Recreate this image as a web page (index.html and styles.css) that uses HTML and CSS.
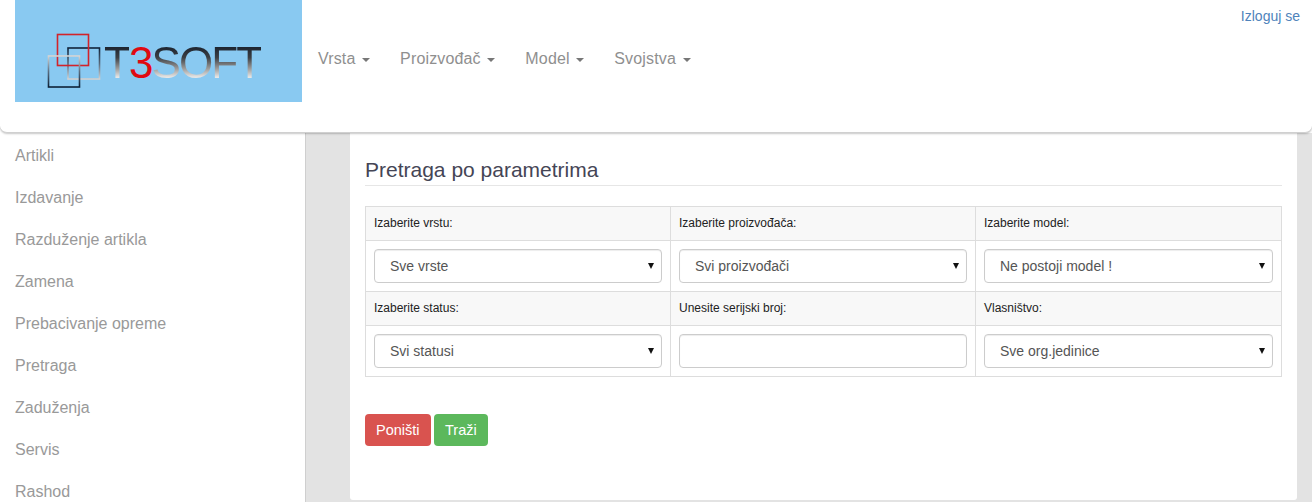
FILE: index.html
```html
<!DOCTYPE html>
<html lang="sr">
<head>
<meta charset="utf-8">
<title>T3SOFT</title>
<link rel="stylesheet" href="styles.css">
</head>
<body>
<header class="navbar">
  <a class="brand" href="#">
    <svg class="brand-squares" width="58" height="56" viewBox="0 0 58 56" fill="none">
      <defs>
        <linearGradient id="g1" x1="0" y1="0" x2="0" y2="1"><stop offset="0" stop-color="#d5d5d5"/><stop offset=".5" stop-color="#5a6d80"/><stop offset="1" stop-color="#0c2036"/></linearGradient>
        <linearGradient id="g2" x1="0" y1="0" x2="0" y2="1"><stop offset="0" stop-color="#10233a"/><stop offset=".5" stop-color="#56687a"/><stop offset="1" stop-color="#d2d2d2"/></linearGradient>
      </defs>
      <rect x="21" y="15" width="31.5" height="31" stroke="url(#g2)" stroke-width="1.6"/>
      <rect x="10.5" y="1.5" width="31" height="31" stroke="#d2232a" stroke-width="1.6"/>
      <rect x="1.5" y="23" width="31" height="31" stroke="url(#g1)" stroke-width="1.6"/>
    </svg>
    <span class="brand-text"><span class="brand-t">T</span><span class="brand-3">3</span><span class="brand-t">SOFT</span></span>
  </a>
  <nav class="menu">
    <a href="#">Vrsta <i class="caret"></i></a>
    <a href="#">Proizvođač <i class="caret"></i></a>
    <a href="#">Model <i class="caret"></i></a>
    <a href="#">Svojstva <i class="caret"></i></a>
  </nav>
  <a class="logout" href="#">Izloguj se</a>
</header>
<div class="main">
  <aside class="sidebar">
    <a href="#">Artikli</a>
    <a href="#">Izdavanje</a>
    <a href="#">Razduženje artikla</a>
    <a href="#">Zamena</a>
    <a href="#">Prebacivanje opreme</a>
    <a href="#">Pretraga</a>
    <a href="#">Zaduženja</a>
    <a href="#">Servis</a>
    <a href="#">Rashod</a>
  </aside>
  <div class="content">
    <section class="panel">
      <h1>Pretraga po parametrima</h1>
      <table class="filters">
        <colgroup><col class="col-a"><col class="col-a"><col></colgroup>
        <tr class="labels">
          <td>Izaberite vrstu:</td>
          <td>Izaberite proizvođača:</td>
          <td>Izaberite model:</td>
        </tr>
        <tr>
          <td><select><option>Sve vrste</option></select></td>
          <td><select><option>Svi proizvođači</option></select></td>
          <td><select><option>Ne postoji model !</option></select></td>
        </tr>
        <tr class="labels">
          <td>Izaberite status:</td>
          <td>Unesite serijski broj:</td>
          <td>Vlasništvo:</td>
        </tr>
        <tr>
          <td><select><option>Svi statusi</option></select></td>
          <td><input type="text"></td>
          <td><select><option>Sve org.jedinice</option></select></td>
        </tr>
      </table>
      <div class="actions">
        <button class="btn btn-red" type="button">Poništi</button>
        <button class="btn btn-green" type="button">Traži</button>
      </div>
    </section>
  </div>
</div>
</body>
</html>
```
FILE: styles.css
```css
* { box-sizing: border-box; }
html, body { margin: 0; height: 502px; overflow: hidden; }
body { font-family: "Liberation Sans", Arial, sans-serif; font-size: 14px; background: #fff; color: #333; }
a { text-decoration: none; }

.navbar {
  position: relative;
  z-index: 2;
  height: 133px;
  display: flex;
  align-items: flex-start;
  padding-left: 15px;
  background: #fff;
  border-bottom: 1px solid #d0d0d0;
  border-radius: 0 0 7px 7px;
  box-shadow: 0 1px 2px rgba(0,0,0,.22);
}
.brand {
  width: 287px;
  height: 102px;
  background: #89c9f1;
  display: flex;
  align-items: flex-start;
  padding: 33px 0 0 32px;
}
.brand-squares { flex: none; }
.brand-text {
  font-size: 44px;
  line-height: 38px;
  letter-spacing: -1.9px;
  margin: 11px 0 0 -1px;
  white-space: nowrap;
}
.brand-t {
  background: linear-gradient(#1c2430 18%, #3c3f44 40%, #9a9a9a 62%, #e6e6e6 80%);
  -webkit-background-clip: text;
  background-clip: text;
  color: transparent;
}
.brand-3 { color: #e00a12; }

.menu { display: flex; padding-top: 37px; margin-left: 1px; }
.menu a {
  font-size: 16px;
  letter-spacing: .15px;
  line-height: 44px;
  padding: 0 15px;
  color: #8f8f8f;
  white-space: nowrap;
}
.caret {
  display: inline-block;
  margin-left: 2px;
  vertical-align: middle;
  border-top: 4px solid #777;
  border-left: 4px solid transparent;
  border-right: 4px solid transparent;
}
.logout {
  margin-left: auto;
  margin-right: 12px;
  margin-top: 8px;
  font-size: 14px;
  line-height: 16px;
  color: #4f83bb;
}

.main { display: flex; height: 369px; }
.sidebar {
  width: 306px;
  flex: none;
  padding-top: 2px;
  background: #fff;
  border-right: 1px solid #cfcfcf;
  overflow: hidden;
}
.sidebar a {
  display: block;
  height: 42px;
  padding-left: 15px;
  font-size: 16px;
  line-height: 42px;
  color: #999;
}
.content {
  flex: 1;
  padding: 0 15px 2px 44px;
  background: #e3e3e3;
}
.panel {
  height: 100%;
  padding: 0 15px;
  background: #fff;
  border-radius: 0 0 3px 3px;
}
h1 {
  margin: 0 0 20px;
  padding: 24px 0 1px;
  height: 53px;
  font-size: 21px;
  font-weight: 400;
  line-height: 26px;
  color: #454555;
  border-bottom: 1px solid #e6e6e6;
}
.filters {
  width: 917px;
  table-layout: fixed;
  border-collapse: collapse;
  border: 1px solid #ddd;
}
.col-a { width: 305px; }
.filters td {
  padding: 8px;
  border: 1px solid #ddd;
  vertical-align: middle;
}
.labels td {
  height: 34px;
  padding: 7px 8px 9px;
  background: #f8f8f8;
  font-size: 12px;
  line-height: 16px;
  color: #222;
}
.filters tr:not(.labels) td { height: 51px; }
select, input {
  display: block;
  width: 100%;
  height: 34px;
  padding: 6px 12px;
  font-family: inherit;
  font-size: 14px;
  color: #555;
  background: #fff;
  border: 1px solid #ccc;
  border-radius: 4px;
  box-shadow: inset 0 1px 1px rgba(0,0,0,.075);
}
select {
  appearance: none;
  -webkit-appearance: none;
  padding-left: 15px;
  background: #fff url("data:image/svg+xml,%3Csvg xmlns='http://www.w3.org/2000/svg' width='6' height='6'%3E%3Cpath d='M0 0h6L3 6z' fill='%23111'/%3E%3C/svg%3E") no-repeat right 7px top 13px;
}
.actions { display: flex; gap: 3px; margin-top: 37px; }
.btn {
  height: 32px;
  padding: 0 11.5px;
  font-family: inherit;
  font-size: 14.5px;
  color: #fff;
  border: 0;
  border-radius: 4px;
}
.btn-red { background: #d9534f; padding: 0 11px; }
.btn-green { background: #5cb85c; }
```
